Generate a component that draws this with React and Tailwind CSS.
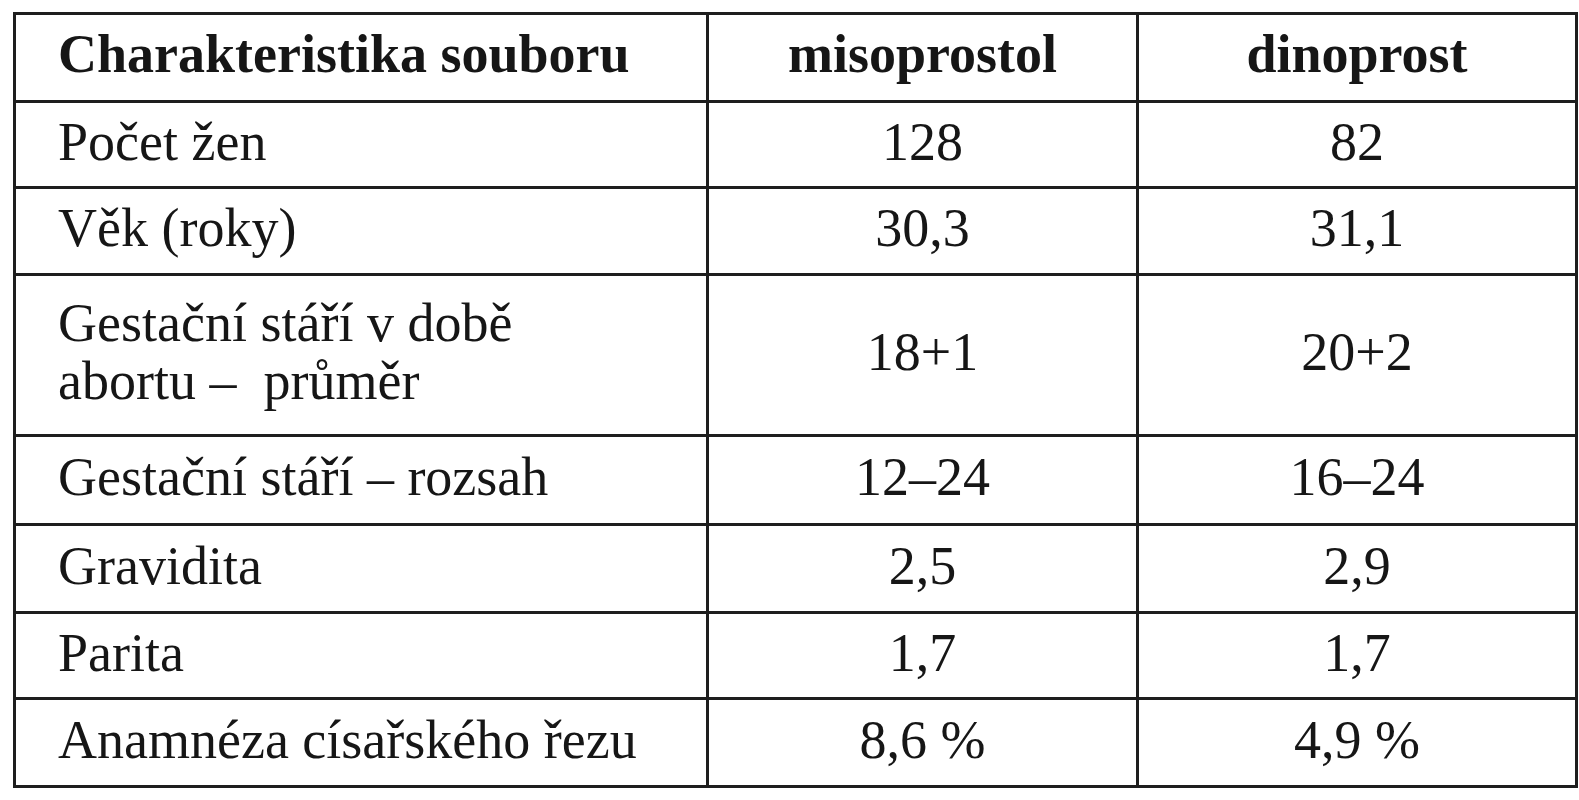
import React from 'react';

const ROWS = [
  { label: 'Počet žen', a: '128', b: '82', h: 'h-[86px]' },
  { label: 'Věk (roky)', a: '30,3', b: '31,1', h: 'h-[87px]' },
  { label: ['Gestační stáří v době', 'abortu –\u00a0 průměr'], a: '18+1', b: '20+2', h: 'h-[161px]' },
  { label: 'Gestační stáří – rozsah', a: '12–24', b: '16–24', h: 'h-[89px]' },
  { label: 'Gravidita', a: '2,5', b: '2,9', h: 'h-[88px]' },
  { label: 'Parita', a: '1,7', b: '1,7', h: 'h-[86px]' },
  { label: 'Anamnéza císařského řezu', a: '8,6 %', b: '4,9 %', h: 'h-[88px]' },
];

export default function App() {
  return (
    <div className="w-[1579px] h-[800px] bg-white pt-[12px] pl-[13px] text-[#161616]" style={{ fontFamily: '"Liberation Serif", "Times New Roman", serif' }}>
      <table className="table-fixed w-[1562px] border-collapse text-[54px] leading-[58px]">
        <colgroup>
          <col className="w-[693px]" />
          <col className="w-[430px]" />
          <col className="w-[439px]" />
        </colgroup>
        <thead>
          <tr className="h-[88px]">
            <th className="border-[3px] border-[#1e1e1e] pl-[42px] text-left font-bold align-middle pb-[8px]">Charakteristika souboru</th>
            <th className="border-[3px] border-[#1e1e1e] text-center font-bold align-middle pb-[8px]">misoprostol</th>
            <th className="border-[3px] border-[#1e1e1e] text-center font-bold align-middle pb-[8px]">dinoprost</th>
          </tr>
        </thead>
        <tbody>
          {ROWS.map((r, i) => (
            <tr key={i} className={r.h}>
              <td className="border-[3px] border-[#1e1e1e] pl-[42px] align-middle pb-[6px]">
                {Array.isArray(r.label) ? (
                  <>
                    <div>{r.label[0]}</div>
                    <div>{r.label[1]}</div>
                  </>
                ) : r.label}
              </td>
              <td className="border-[3px] border-[#1e1e1e] text-center align-middle pb-[6px]">{r.a}</td>
              <td className="border-[3px] border-[#1e1e1e] text-center align-middle pb-[6px]">{r.b}</td>
            </tr>
          ))}
        </tbody>
      </table>
    </div>
  );
}
